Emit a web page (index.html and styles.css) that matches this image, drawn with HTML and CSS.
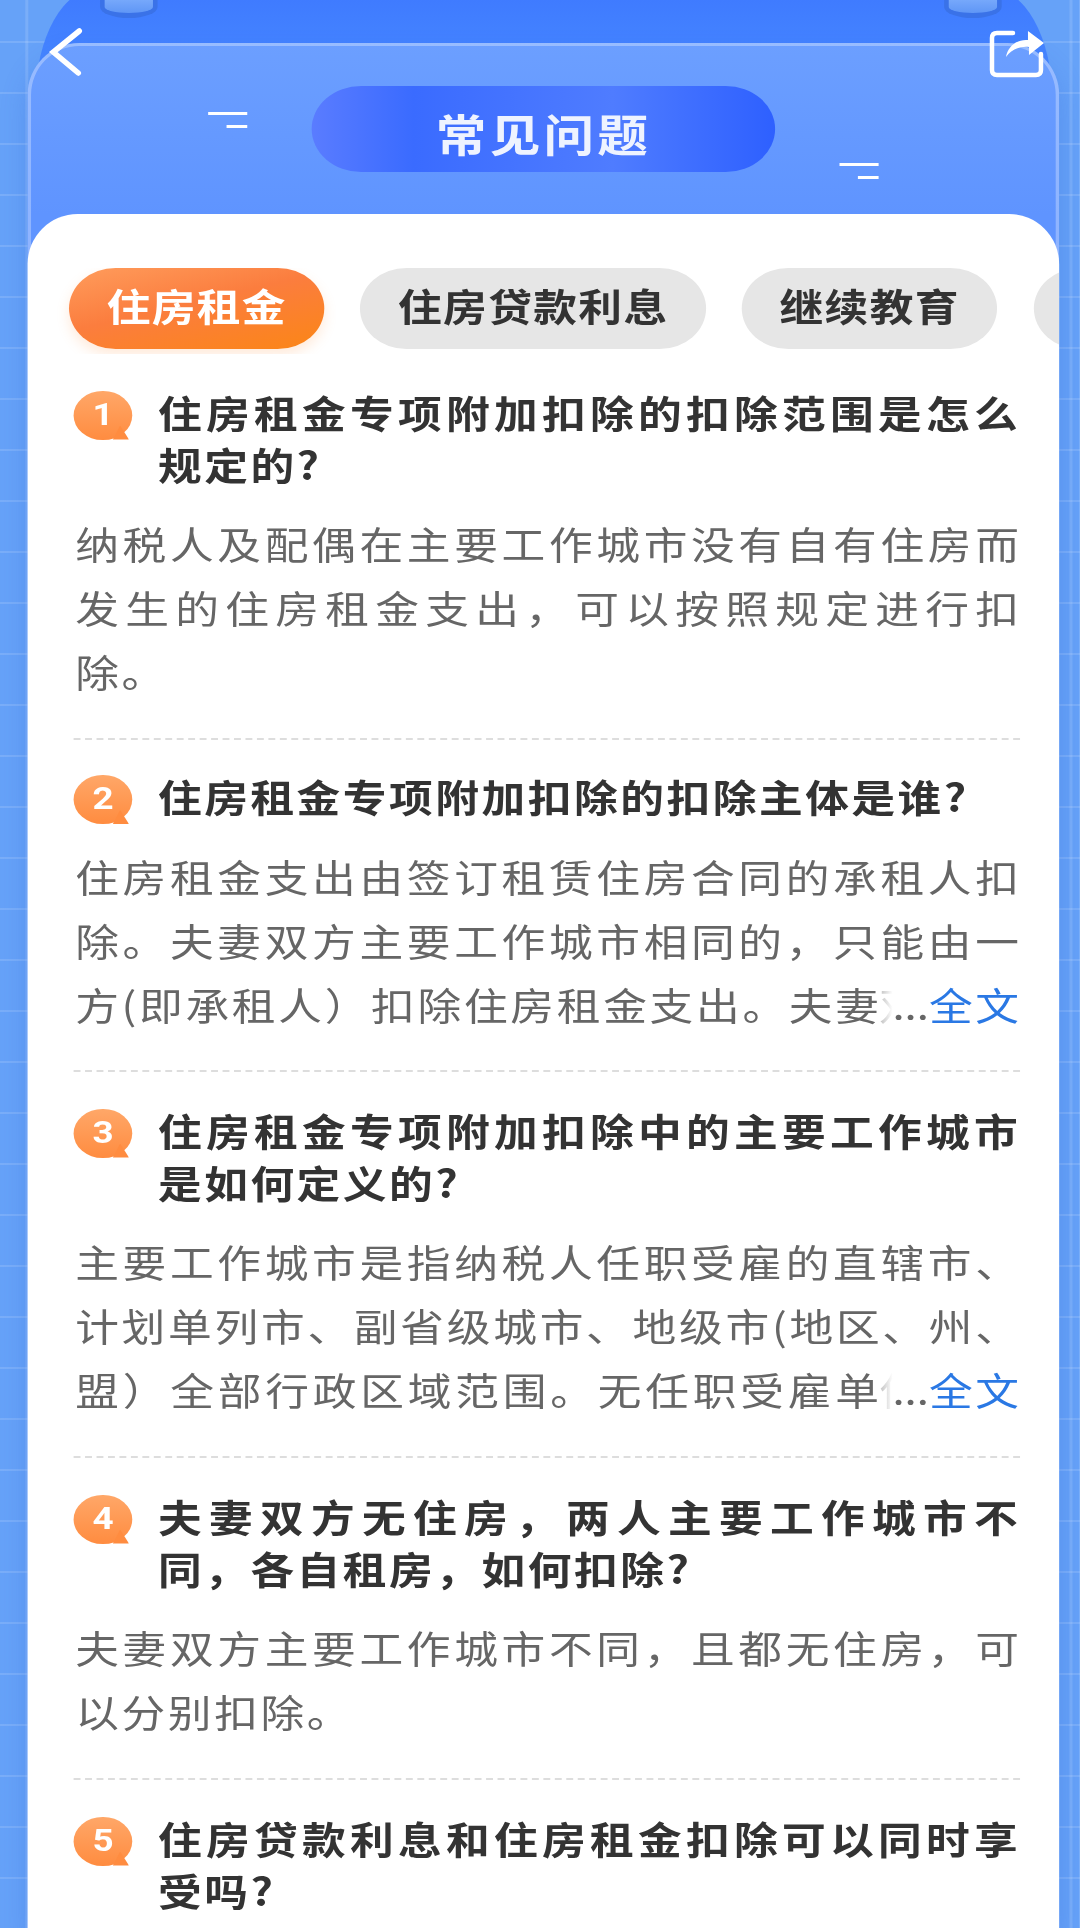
FILE: index.html
```html
<!DOCTYPE html>
<html lang="zh-CN">
<head>
<meta charset="UTF-8">
<meta name="viewport" content="width=device-width, initial-scale=1">
<title>常见问题</title>
<link rel="stylesheet" href="styles.css">
</head>
<body>

<div class="page">
  <div class="board"></div>
  <div class="peg peg-left"></div>
  <div class="peg peg-right"></div>

  <a class="back" href="#" aria-label="返回">
    <svg width="31.3" height="52" viewBox="0 0 36 52" preserveAspectRatio="none"><path d="M31 3 L5 24 L30 45" fill="none" stroke="#fff" stroke-width="5.5" stroke-linecap="round" stroke-linejoin="miter"/></svg>
  </a>
  <a class="share" href="#" aria-label="分享">
    <svg width="50.4" height="48" viewBox="0 0 58 48" preserveAspectRatio="none">
      <path d="M24 3 H8 Q3 3 3 8 V40 Q3 45 8 45 H47 Q52 45 52 40 V24" fill="none" stroke="#fff" stroke-width="4.5" stroke-linecap="round"/>
      <path d="M17 27 C19 16 28 9 39 10 V1 L55 13 L40 25 V17 C30 16 22 20 17 27 Z" fill="#fff"/>
    </svg>
  </a>

  <div class="panel">
    <header class="head">
      <div class="dash dash-left"><i></i><i></i></div>
      <h1 class="head-title">常见问题</h1>
      <div class="dash dash-right"><i></i><i></i></div>
    </header>

    <main class="card">
      <nav class="tabs">
        <a class="tab active" href="#">住房租金</a>
        <a class="tab" href="#">住房贷款利息</a>
        <a class="tab" href="#">继续教育</a>
        <a class="tab tab-next" href="#" aria-label="更多"></a>
      </nav>

      <section class="faq">
        <div class="q">
          <span class="num">1</span>
          <h3><span class="fill">住房租金专项附加扣除的扣除范围是怎么</span><span class="ln">规定的?</span></h3>
        </div>
        <p class="a">
          <span class="fill">纳税人及配偶在主要工作城市没有自有住房而</span>
          <span class="fill">发生的住房租金支出，可以按照规定进行扣</span>
          <span class="ln">除。</span>
        </p>
      </section>

      <section class="faq one">
        <div class="q">
          <span class="num">2</span>
          <h3><span class="ln">住房租金专项附加扣除的扣除主体是谁?</span></h3>
        </div>
        <p class="a">
          <span class="fill">住房租金支出由签订租赁住房合同的承租人扣</span>
          <span class="fill">除。夫妻双方主要工作城市相同的，只能由一</span>
          <span class="cut"><span class="txt">方(即承租人）扣除住房租金支出。夫妻</span><span class="fade">双</span><span class="dots">...</span><a class="more" href="#">全文</a></span>
        </p>
      </section>

      <section class="faq">
        <div class="q">
          <span class="num">3</span>
          <h3><span class="fill">住房租金专项附加扣除中的主要工作城市</span><span class="ln">是如何定义的?</span></h3>
        </div>
        <p class="a">
          <span class="fill">主要工作城市是指纳税人任职受雇的直辖市、</span>
          <span class="fill">计划单列市、副省级城市、地级市(地区、州、</span>
          <span class="cut"><span class="txt">盟）全部行政区域范围。无任职受雇单</span><span class="fade">位</span><span class="dots">...</span><a class="more" href="#">全文</a></span>
        </p>
      </section>

      <section class="faq">
        <div class="q">
          <span class="num">4</span>
          <h3><span class="fill">夫妻双方无住房，两人主要工作城市不</span><span class="ln">同，各自租房，如何扣除?</span></h3>
        </div>
        <p class="a">
          <span class="fill">夫妻双方主要工作城市不同，且都无住房，可</span>
          <span class="ln">以分别扣除。</span>
        </p>
      </section>

      <section class="faq">
        <div class="q">
          <span class="num">5</span>
          <h3><span class="fill">住房贷款利息和住房租金扣除可以同时享</span><span class="ln">受吗?</span></h3>
        </div>
      </section>
    </main>
  </div>
</div>

</body>
</html>
```

FILE: styles.css
```css
* {
  box-sizing: border-box;
}

body {
  margin: 0;
  overflow: hidden;
  font-family: "Noto Sans CJK SC", "Noto Sans", sans-serif;
}

a {
  text-decoration: none;
}

/* the whole screen is drawn 1.15x wider than tall, so widths below are in unstretched px */
.page {
  position: relative;
  width: 939.13px;
  height: 1928px;
  padding-top: 43px;
  overflow: hidden;
  transform: scaleX(1.15);
  transform-origin: 0 0;
  background-color: #66a2f8;
  background-image:
    linear-gradient(rgba(255, 255, 255, 0.13), rgba(255, 255, 255, 0.13)),
    linear-gradient(rgba(255, 255, 255, 0.13), rgba(255, 255, 255, 0.13)),
    repeating-linear-gradient(to bottom, transparent 0, transparent 49px, rgba(255, 255, 255, 0.13) 49px, rgba(255, 255, 255, 0.13) 51px);
  background-size: 2.6px 100%, 2.6px 100%, 100% 100%;
  background-position: 21.7px 0, 929.6px 0, 0 -8px;
  background-repeat: no-repeat;
}

/* blue board behind the glass panel */
.board {
  position: absolute;
  left: 31.3px;
  top: -12px;
  width: 883.5px;
  height: 130px;
  border-radius: 54px 54px 0 0 / 110px 110px 0 0;
  background: linear-gradient(#3e79ff, #4b8fff);
}

.peg {
  position: absolute;
  top: 0;
  width: 50.4px;
  height: 18px;
  border-radius: 0 0 25px 25px / 0 0 11px 11px;
  background: #3a72e8;
}

.peg::before {
  content: "";
  position: absolute;
  left: 4.3px;
  top: 0;
  width: 41.8px;
  height: 13px;
  border-radius: 0 0 21px 21px / 0 0 6px 6px;
  background: linear-gradient(#76a8fb, #5f96f6);
}

.peg-left {
  left: 87px;
}

.peg-right {
  left: 821px;
}

.back {
  position: absolute;
  left: 41.7px;
  top: 28px;
  z-index: 2;
}

.share {
  position: absolute;
  left: 860px;
  top: 30px;
  z-index: 2;
}

.back svg,
.share svg {
  display: block;
}

.panel {
  position: relative;
  width: 896.5px;
  height: 1885px;
  margin-left: 24.35px;
  border-radius: 45px 45px 0 0 / 52px 52px 0 0;
  background: linear-gradient(#6c9fff, #5f94ff 171px);
  box-shadow: inset 0 0 0 3px rgba(255, 255, 255, 0.3), 0 14px 24px rgba(40, 90, 210, 0.25);
}

.head {
  position: relative;
  display: flex;
  justify-content: center;
  height: 171px;
  padding-top: 43px;
}

.head-title {
  width: 402.6px;
  height: 86px;
  margin: 0;
  border-radius: 43px;
  background: linear-gradient(90deg, #5a7cff 0, #3a6bff 22%, #4f7cff 65%, #2e60ff 100%);
  color: #eef3ff;
  font-size: 44px;
  font-weight: 700;
  line-height: 94px;
  letter-spacing: 2.8px;
  text-align: center;
}

.dash {
  position: absolute;
  display: flex;
  flex-direction: column;
  align-items: flex-end;
  gap: 10px;
  width: 34px;
}

.dash i {
  display: block;
  height: 3px;
  background: #fff;
}

.dash i:first-child {
  width: 34px;
}

.dash i:last-child {
  width: 18.3px;
}

.dash-left {
  left: 157px;
  top: 69px;
}

.dash-right {
  left: 706px;
  top: 120px;
}

.card {
  height: 1714px;
  padding-top: 54px;
  overflow: hidden;
  border-radius: 43.5px 43.5px 0 0 / 50px 50px 0 0;
  background: #fff;
}

.tabs {
  display: flex;
  gap: 31.2px;
  padding-left: 35.7px;
  padding-bottom: 5px;
  overflow: hidden;
}

.tab {
  flex: none;
  height: 81px;
  padding: 0 32.7px;
  border-radius: 41px;
  background: #e6e6e6;
  color: #333;
  font-size: 38px;
  font-weight: 700;
  line-height: 73px;
  letter-spacing: 1.2px;
  white-space: nowrap;
}

.tab-next {
  width: 220px;
}

.tab.active {
  background: linear-gradient(165deg, #ff9c5c 0, #fb7d3e 45%, #fb8616 100%);
  box-shadow: 0 6px 12px rgba(255, 150, 70, 0.2);
  color: #fff;
}

.faq {
  margin: 0 33.8px 0 40px;
  padding: 31.5px 0 35px;
  border-bottom: 2px dashed #ddd;
}

.faq.one {
  padding: 30px 0 34px;
}

.faq.one .a {
  margin-top: 20px;
}

.faq:last-child {
  border-bottom: 0;
}

.q {
  display: flex;
  align-items: flex-start;
  gap: 22.6px;
}

.num {
  position: relative;
  flex: none;
  width: 50.4px;
  height: 49px;
  margin-top: 5px;
  border-radius: 50%;
  background: linear-gradient(#ffa768, #ff8c40);
  color: #fff;
  font-family: Roboto, sans-serif;
  font-size: 32px;
  font-weight: 700;
  line-height: 47px;
  text-align: center;
}

.num::after {
  content: "";
  position: absolute;
  right: 2.6px;
  bottom: 0;
  width: 14px;
  height: 14px;
  background: #ff8c40;
  clip-path: polygon(45% 0, 100% 100%, 0 100%);
}

.q h3 {
  flex: 1;
  margin: 0;
  padding-right: 2px;
  color: #333;
  font-size: 38px;
  font-weight: 700;
  line-height: 52px;
  letter-spacing: 2.2px;
}

.a {
  margin: 21.5px 0 0;
  padding: 0 1px;
  color: #666;
  font-size: 38px;
  line-height: 64px;
  letter-spacing: 2.3px;
}

.ln {
  display: block;
}

/* full line, spread from edge to edge */
.fill {
  display: block;
  letter-spacing: 0;
  text-align: justify;
  text-align-last: justify;
  text-justify: inter-character;
}

/* last line of a folded answer */
.cut {
  display: flex;
  white-space: nowrap;
}

.txt {
  flex: 1;
  letter-spacing: 0;
  text-align: justify;
  text-align-last: justify;
  text-justify: inter-character;
}

.fade {
  margin-right: -28.6px;
  background: linear-gradient(90deg, #bbb 0, rgba(255, 255, 255, 0) 30%);
  -webkit-background-clip: text;
  background-clip: text;
  color: transparent;
}

.dots {
  letter-spacing: 0;
}

.more {
  margin-right: -2.3px;
  color: #2a78e4;
}
```
